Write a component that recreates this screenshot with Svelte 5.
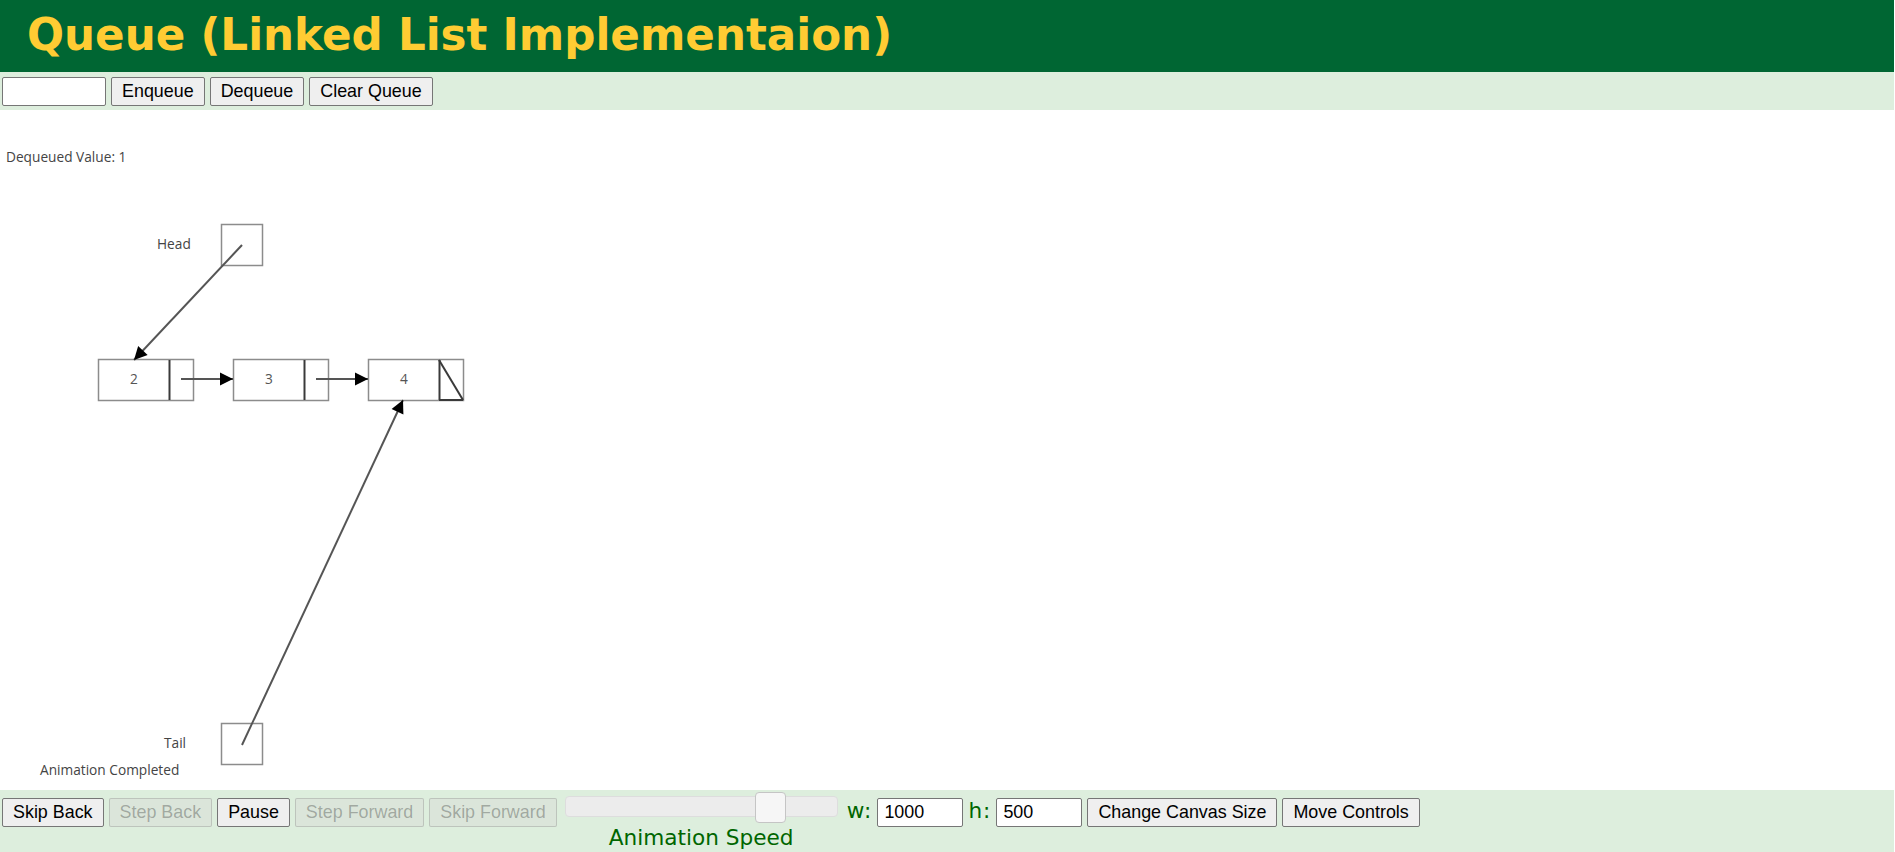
<script>
  // node boxes on the canvas, y is relative to the canvas top
  const nodes = [
    { x: 98, label: '2', divider: 169 },
    { x: 233, label: '3', divider: 304 },
    { x: 368, label: '4', divider: 439 }
  ];

  const arrows = [
    { x1: 242, y1: 135, x2: 134, y2: 250 },
    { x1: 181, y1: 269, x2: 233, y2: 269 },
    { x1: 316, y1: 269, x2: 368, y2: 269 },
    { x1: 242, y1: 635, x2: 403, y2: 290 }
  ];

  function head(a) {
    const len = Math.hypot(a.x2 - a.x1, a.y2 - a.y1);
    const ux = (a.x2 - a.x1) / len;
    const uy = (a.y2 - a.y1) / len;
    const bx = a.x2 - ux * 13;
    const by = a.y2 - uy * 13;
    return `${a.x2},${a.y2} ${bx - uy * 6.5},${by + ux * 6.5} ${bx + uy * 6.5},${by - ux * 6.5}`;
  }
</script>

<div class="page">
  <h1 class="title">Queue (Linked List Implementaion)</h1>

  <div class="toolbar top">
    <input class="value" type="text" />
    <button>Enqueue</button>
    <button>Dequeue</button>
    <button>Clear Queue</button>
  </div>

  <svg class="canvas" width="1894" height="680" viewBox="0 0 1894 680">
    <text x="6" y="52">Dequeued Value: 1</text>
    <text x="157" y="139">Head</text>
    <text x="164" y="638">Tail</text>
    <text x="40" y="665">Animation Completed</text>

    <rect class="box" x="221.5" y="114.5" width="41" height="41" />
    <rect class="box" x="221.5" y="613.5" width="41" height="41" />

    {#each nodes as n}
      <rect class="box" x={n.x + 0.5} y="249.5" width="95" height="41" />
      <line class="dark" x1={n.divider + 0.5} y1="250" x2={n.divider + 0.5} y2="290" />
      <text class="num" x={n.x + 36} y="274">{n.label}</text>
    {/each}

    <line class="dark" x1="439" y1="250" x2="463" y2="290" />
    <line class="dark" x1="439" y1="290" x2="463" y2="290" />

    {#each arrows as a}
      <line class="arrow" x1={a.x1} y1={a.y1} x2={a.x2} y2={a.y2} />
      <polygon points={head(a)} />
    {/each}
  </svg>

  <div class="toolbar bottom">
    <button>Skip Back</button>
    <button disabled>Step Back</button>
    <button>Pause</button>
    <button disabled>Step Forward</button>
    <button disabled>Skip Forward</button>
    <div class="speed">
      <div class="track"><span class="thumb"></span></div>
      <div class="speed-label">Animation Speed</div>
    </div>
    <span class="dim">w:</span>
    <input class="size" type="text" value="1000" />
    <span class="dim">h:</span>
    <input class="size" type="text" value="500" />
    <button>Change Canvas Size</button>
    <button>Move Controls</button>
  </div>
</div>

<style>
  :global(body) {
    margin: 0;
    background: #fff;
  }

  .page {
    width: 1894px;
    height: 852px;
    overflow: hidden;
  }

  .title {
    margin: 0;
    height: 72px;
    padding-left: 27px;
    box-sizing: border-box;
    background: #006633;
    color: #ffcc33;
    font-family: "DejaVu Sans", Verdana, sans-serif;
    font-size: 43.6px;
    font-weight: bold;
    line-height: 71px;
  }

  .toolbar {
    display: flex;
    background: #ddeedd;
    box-sizing: border-box;
    padding-left: 2px;
    gap: 5px;
  }

  .top {
    height: 38px;
    padding-top: 5px;
    align-items: flex-start;
  }

  .bottom {
    height: 62px;
    padding-top: 8px;
    align-items: flex-start;
  }

  button,
  input {
    box-sizing: border-box;
    height: 29px;
    margin: 0;
    font-family: "Liberation Sans", Arial, sans-serif;
    font-size: 17.9px;
    color: #000;
    border: 1px solid #767676;
    border-radius: 2px;
  }

  button {
    padding: 0 10px;
    background: #efefef;
  }

  button:disabled {
    background: #dbe5da;
    color: rgba(16, 16, 16, 0.3);
    border-color: rgba(118, 118, 118, 0.3);
  }

  input {
    background: #fff;
    padding: 1px 6px;
  }

  .value {
    width: 104px;
  }

  .size {
    width: 86px;
  }

  .canvas {
    display: block;
  }

  .canvas text {
    font-family: "Open Sans", "Noto Sans", sans-serif;
    font-size: 13.7px;
    fill: #444;
  }

  .canvas .num {
    text-anchor: middle;
    fill: #555;
  }

  .box {
    fill: none;
    stroke: #8c8c8c;
    stroke-width: 1.5;
  }

  .dark {
    stroke: #3a3a3a;
    stroke-width: 2;
  }

  .arrow {
    stroke: #555;
    stroke-width: 2;
  }

  polygon {
    fill: #000;
  }

  .speed {
    position: relative;
    width: 273px;
    margin-left: 3px;
    margin-right: 4px;
  }

  .track {
    position: relative;
    height: 21px;
    margin-top: -2px;
    box-sizing: border-box;
    background: #ececec;
    border: 1px solid #ddd;
    border-radius: 4px;
  }

  .thumb {
    position: absolute;
    left: 189px;
    top: -5px;
    width: 31px;
    height: 31px;
    box-sizing: border-box;
    background: #f6f6f6;
    border: 1px solid #c5c5c5;
    border-radius: 4px;
  }

  .speed-label {
    margin-top: 9px;
    text-align: center;
    color: #006600;
    font-family: "DejaVu Sans", Verdana, sans-serif;
    font-size: 21.6px;
    line-height: 24px;
  }

  .dim {
    color: #006600;
    font-family: "DejaVu Sans", Verdana, sans-serif;
    font-size: 21.6px;
    line-height: 26px;
    letter-spacing: 1px;
  }
</style>
